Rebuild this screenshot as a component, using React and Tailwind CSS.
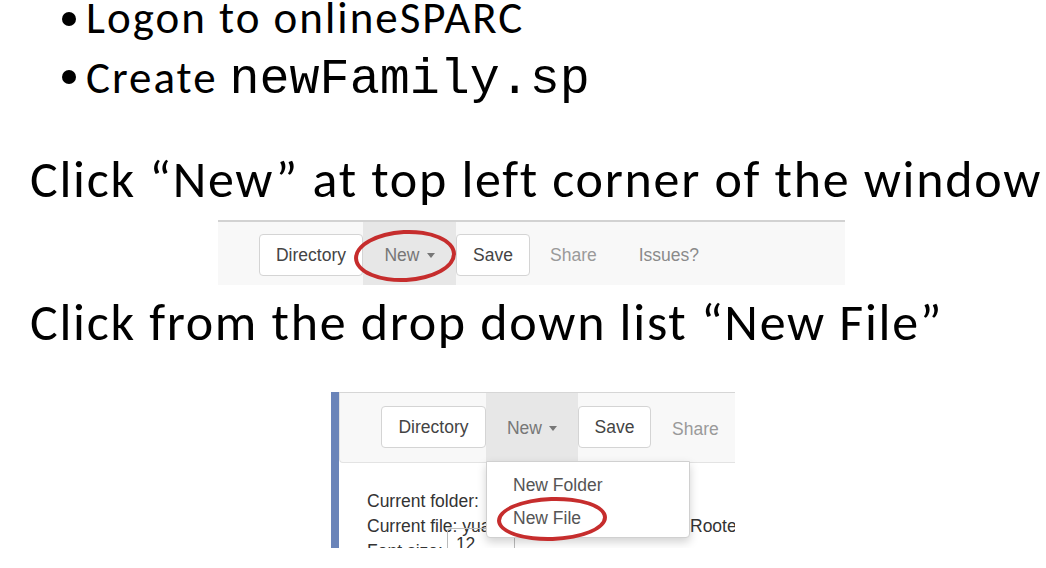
import React from "react";

const sans = { fontFamily: "Carlito, Lato, 'Noto Sans', sans-serif" };

function Caret() {
  return <span className="inline-block ml-[7px] w-0 h-0 border-l-[4px] border-r-[4px] border-t-[5px] border-l-transparent border-r-transparent border-t-[#777] align-middle" />;
}

function Btn({ children, w }) {
  return (
    <div className={`${w} h-[42px] bg-white border border-[#d4d4d4] rounded-[4px] flex items-center justify-center text-[#444]`}>
      {children}
    </div>
  );
}

export default function App() {
  return (
    <div className="w-[1046px] h-[568px] bg-white overflow-hidden relative flex flex-col text-black" style={sans}>
      {/* bullets */}
      <div className="flex items-start pl-[62px] h-[36px] shrink-0">
        <div className="mt-[12px] w-[14px] h-[14px] rounded-full bg-black shrink-0" />
        <div className="ml-[10px] text-[45px] leading-[36px] tracking-[2px] whitespace-nowrap">Logon to onlineSPARC</div>
      </div>
      <div className="flex items-start pl-[62px] h-[36px] mt-[24px] shrink-0">
        <div className="mt-[10px] w-[14px] h-[14px] rounded-full bg-black shrink-0" />
        <div className="ml-[10px] flex items-baseline h-[36px] whitespace-nowrap">
          <span className="text-[45px] leading-[36px] tracking-[2px]">Create</span>
          <span className="ml-[12px] text-[50px] leading-[36px]" style={{ fontFamily: "'Liberation Mono', monospace" }}>newFamily.sp</span>
        </div>
      </div>

      {/* heading 1 */}
      <div className="mt-[57px] h-[52px] shrink-0 pl-[30px] text-[52px] leading-[52px] tracking-[1.7px] whitespace-nowrap">
        Click “New” at top left corner of the window
      </div>

      {/* screenshot 1 */}
      <div className="mt-[15px] ml-[218px] w-[627px] h-[65px] shrink-0 relative bg-[#f8f8f8] border-t-2 border-[#d2d2d2] flex items-start pl-[41px] text-[17.5px]" style={{ fontFamily: "'Liberation Sans', Arial, sans-serif" }}>
        <div className="mt-[12px]"><Btn w="w-[104px]">Directory</Btn></div>
        <div className="w-[93px] h-full bg-[#e7e7e7] flex items-center justify-center text-[#777] pt-[3px]">
          New<Caret />
        </div>
        <div className="mt-[12px]"><Btn w="w-[74px]">Save</Btn></div>
        <div className="ml-[20px] h-full flex items-center text-[#9a9a9a] pt-[4px]">Share</div>
        <div className="ml-[42px] h-full flex items-center text-[#8a8a8a] pt-[4px]">Issues?</div>
        <div className="absolute left-[136px] top-[8px] w-[102px] h-[52px] rounded-[50%] border-[4px] border-[#c62d2d] -rotate-3" />
      </div>

      {/* heading 2 */}
      <div className="mt-[11px] h-[52px] shrink-0 pl-[30px] text-[52px] leading-[52px] tracking-[1.7px] whitespace-nowrap">
        Click from the drop down list “New File”
      </div>

      {/* screenshot 2 */}
      <div className="mt-[44px] ml-[331px] w-[404px] h-[156px] shrink-0 relative flex overflow-hidden text-[17.5px]" style={{ fontFamily: "'Liberation Sans', Arial, sans-serif" }}>
        <div className="w-[8px] h-full shrink-0 bg-[#6a84b9]" />
        <div className="flex-1 min-w-0 flex flex-col border-t border-[#d6d6d6]">
          <div className="h-[70px] shrink-0 bg-[#f8f8f8] border-l border-b border-[#e3e3e3] rounded-bl-[4px] flex items-start pl-[41px]">
            <div className="mt-[13px]"><Btn w="w-[105px]">Directory</Btn></div>
            <div className="w-[92px] h-full bg-[#e7e7e7] flex items-center justify-center text-[#777] pt-[2px]">
              New<Caret />
            </div>
            <div className="mt-[13px]"><Btn w="w-[73px]">Save</Btn></div>
            <div className="ml-[21px] h-full flex items-center text-[#9a9a9a] pt-[4px]">Share</div>
          </div>
          <div className="pl-[28px] pt-[26px] text-[#333] leading-[25px] shrink-0">
            <div className="whitespace-nowrap">Current folder:</div>
            <div className="flex whitespace-nowrap">
              <span className="w-[323px] shrink-0 overflow-hidden">Current file: yuanxiao/newFamily.sp</span>
              <span>Rooted</span>
            </div>
            <div className="flex items-start whitespace-nowrap">
              <span>Font size:</span>
              <span className="ml-[4px] mt-[-11px] w-[68px] h-[32px] border border-[#bbb] rounded-[3px] pl-[8px] leading-[30px]">12</span>
            </div>
          </div>
        </div>
        {/* dropdown */}
        <div className="absolute left-[155px] top-[69px] w-[204px] h-[77px] bg-white border border-[#d0d0d0] rounded-b-[4px] shadow-[0_4px_10px_rgba(0,0,0,0.18)] text-[#555] pt-[7px] pl-[26px] leading-[33px]">
          <div>New Folder</div>
          <div>New File</div>
        </div>
        <div className="absolute left-[166px] top-[105px] w-[110px] h-[44px] rounded-[50%] border-[4px] border-[#c62d2d] -rotate-2" />
      </div>
    </div>
  );
}
